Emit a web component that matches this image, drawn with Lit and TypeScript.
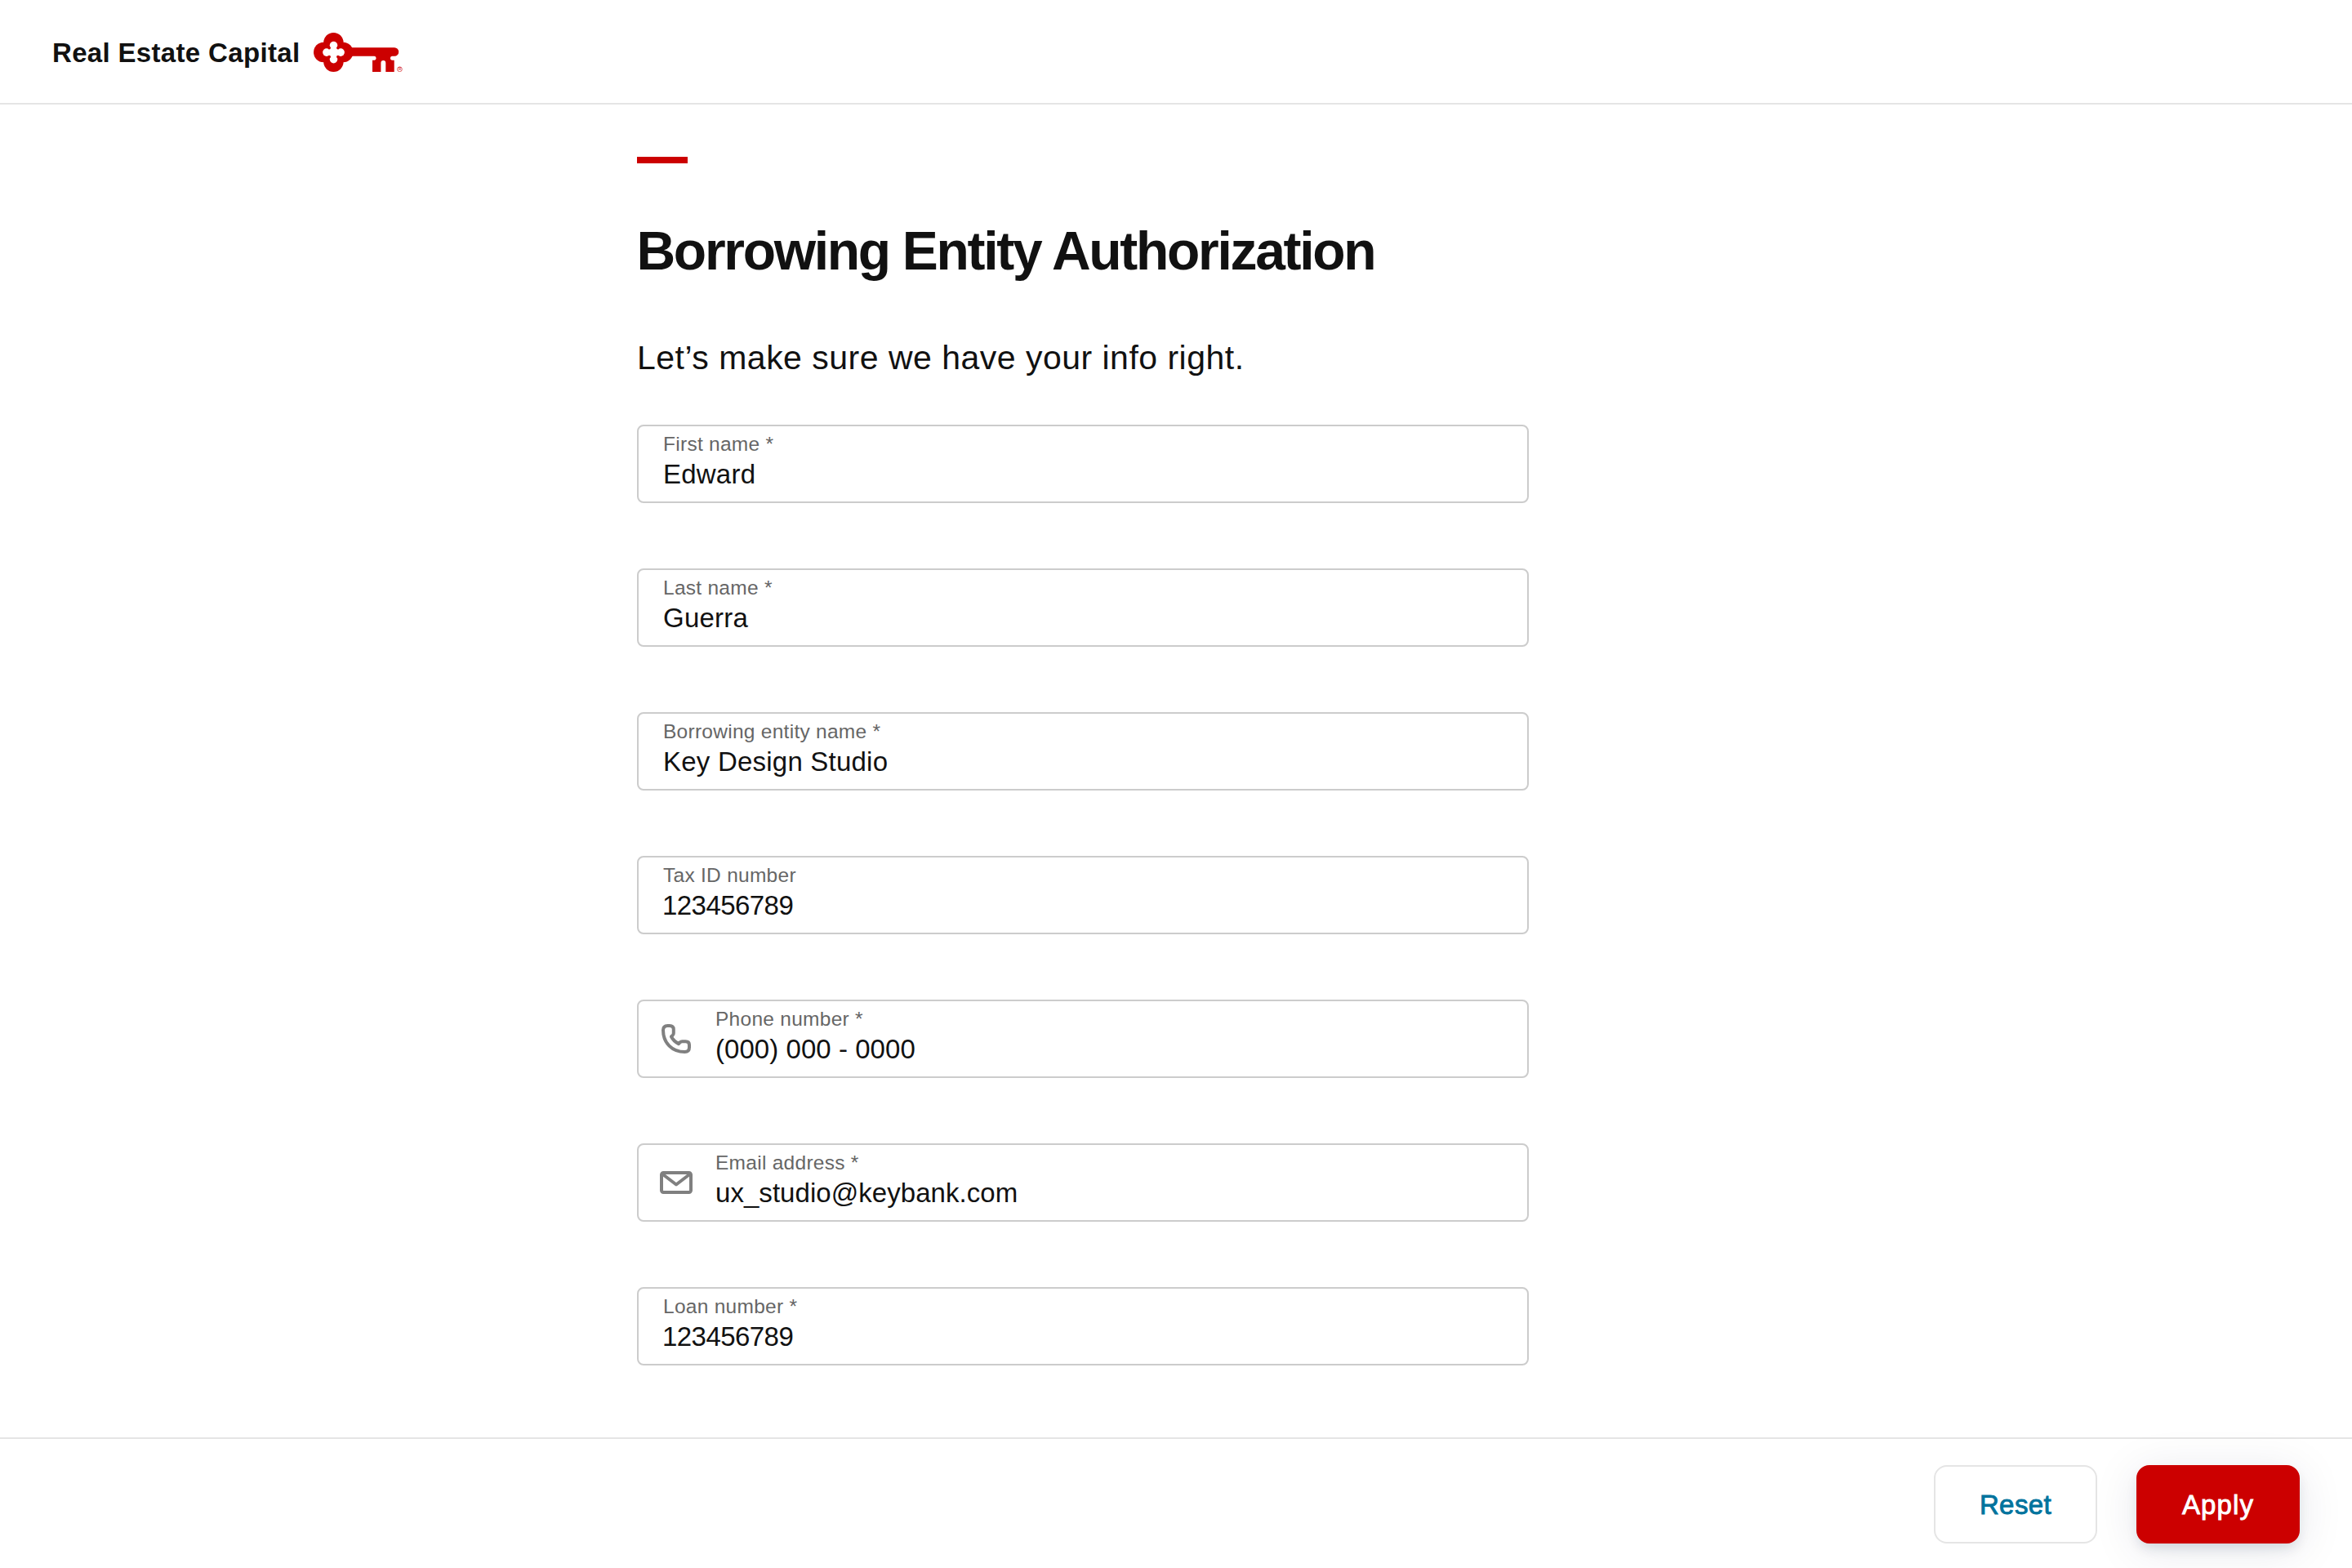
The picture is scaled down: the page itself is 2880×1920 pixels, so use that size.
import { LitElement, html, css, svg, nothing } from 'lit';
import { customElement, property } from 'lit/decorators.js';

type FieldIcon = 'phone' | 'email';

interface Field {
  label: string;
  value: string;
  icon?: FieldIcon;
}

const FIELDS: Field[] = [
  { label: 'First name *', value: 'Edward' },
  { label: 'Last name *', value: 'Guerra' },
  { label: 'Borrowing entity name *', value: 'Key Design Studio' },
  { label: 'Tax ID number', value: '123456789' },
  { label: 'Phone number *', value: '(000) 000 - 0000', icon: 'phone' },
  { label: 'Email address *', value: 'ux_studio@keybank.com', icon: 'email' },
  { label: 'Loan number *', value: '123456789' },
];

const icons = {
  phone: svg`
    <path d="M13.5 8 H16 Q20.8 8 20.8 12.5 V17 Q20.8 18.6 19.7 19.7 L18 21.3 Q20.5 26.6 27 30.2 L28.6 28.4 Q29.7 27.2 31.3 27.2 H35.5 Q40 27.2 40 31.5 V34.5 Q40 40 34.5 40 C19 40 8 29 8 13.5 Q8 8 13.5 8 Z" />
  `,
  email: svg`
    <rect x="6" y="12" width="36" height="24" rx="2.4" />
    <path d="M7 13.5 L24 26.5 L41 13.5" />
  `,
};

@customElement('key-logo')
export class KeyLogo extends LitElement {
  static styles = css`
    :host {
      display: block;
      height: 48px;
    }

    svg {
      display: block;
      fill: #cc0000;
    }

    .cutout {
      fill: #fff;
    }

    .ring {
      fill: none;
      stroke: #cc0000;
      stroke-width: 0.6;
    }

    text {
      font: 4.6px 'Liberation Sans', sans-serif;
    }
  `;

  protected render() {
    return html`
      <svg width="112" height="48" viewBox="0 0 112 48">
        <circle cx="24.4" cy="12.2" r="12.2" />
        <circle cx="12.2" cy="24" r="12.2" />
        <circle cx="36.2" cy="24" r="12.2" />
        <circle cx="24.4" cy="35.8" r="12.2" />
        <g class="cutout">
          <circle cx="24.5" cy="15.6" r="4.8" />
          <circle cx="24.5" cy="32.6" r="4.8" />
          <circle cx="15.9" cy="24.1" r="4.8" />
          <circle cx="33.1" cy="24.1" r="4.8" />
          <rect x="18.9" y="18.5" width="11.2" height="11.2" />
        </g>
        <circle cx="19.2" cy="18.8" r="1.7" />
        <circle cx="29.8" cy="18.8" r="1.7" />
        <circle cx="19.2" cy="29.4" r="1.7" />
        <circle cx="29.8" cy="29.4" r="1.7" />
        <path
          d="M44 18.2 H99 A5.2 5.2 0 0 1 99 28.7 H96 A2.6 2.6 0 0 0 96 33.8 H98.7 V48 H88.3 V37 A2.9 2.9 0 0 0 82.4 37 V48 H72 V33.8 H74.5 A2.6 2.6 0 0 0 74.5 28.7 H44 Z"
        />
        <circle class="ring" cx="105.4" cy="44.8" r="2.9" />
        <text x="103.9" y="46.4">R</text>
      </svg>
    `;
  }
}

@customElement('form-field')
export class FormField extends LitElement {
  @property() label = '';
  @property() value = '';
  @property() icon?: FieldIcon;

  static styles = css`
    :host {
      display: block;
    }

    .box {
      box-sizing: border-box;
      display: flex;
      height: 96px;
      padding: 8px 30px;
      border: 2px solid #cccccc;
      border-radius: 8px;
    }
    .box.with-icon {
      padding-left: 22px;
    }

    .icon {
      width: 48px;
      height: 48px;
      margin: 14px 24px 0 0;
      fill: none;
      stroke: #808080;
      stroke-width: 4;
      stroke-linejoin: round;
    }

    .label {
      color: #666666;
      font-size: 24.5px;
      line-height: 27px;
      letter-spacing: 0.27px;
    }

    .value {
      margin-top: 5px;
      color: #111111;
      font-size: 33px;
      line-height: 37px;
      letter-spacing: 0.22px;
    }
    .with-icon .value {
      letter-spacing: 0.05px;
    }
    .value.numeric {
      margin-left: -1px;
      letter-spacing: -0.55px;
    }
  `;

  protected render() {
    const numeric = /^\d+$/.test(this.value);

    return html`
      <div class="box ${this.icon ? 'with-icon' : ''}">
        ${this.icon
          ? html`<svg class="icon" viewBox="0 0 48 48">${icons[this.icon]}</svg>`
          : nothing}
        <div>
          <div class="label">${this.label}</div>
          <div class="value ${numeric ? 'numeric' : ''}">${this.value}</div>
        </div>
      </div>
    `;
  }
}

@customElement('app-root')
export class AppRoot extends LitElement {
  static styles = css`
    :host {
      display: flex;
      flex-direction: column;
      box-sizing: border-box;
      height: 1920px;
      overflow: hidden;
      background: #fff;
      color: #111111;
      font-family: 'Liberation Sans', Arial, sans-serif;
    }

    header {
      box-sizing: border-box;
      display: flex;
      height: 128px;
      padding: 40px 64px 0;
      border-bottom: 2px solid #e5e5e5;
    }

    .brand {
      width: 320px;
      margin-top: 6px;
      font-size: 33px;
      font-weight: 700;
      line-height: 37px;
      letter-spacing: 0.33px;
    }

    main {
      flex: 1;
      width: 1092px;
      padding: 64px 0 0 780px;
    }

    .accent {
      width: 62px;
      height: 8px;
      background: #cc0000;
    }

    h1 {
      margin: 70px 0 0 -0.5px;
      font-size: 66px;
      line-height: 74px;
      letter-spacing: -2.3px;
      white-space: nowrap;
    }

    .lead {
      margin: 71px 0 59px;
      font-size: 41px;
      line-height: 46px;
      letter-spacing: 0.49px;
    }

    form {
      display: flex;
      flex-direction: column;
      gap: 80px;
    }

    footer {
      box-sizing: border-box;
      display: flex;
      justify-content: flex-end;
      gap: 48px;
      height: 160px;
      padding: 32px 64px 0;
      border-top: 2px solid #e5e5e5;
    }

    button {
      box-sizing: border-box;
      width: 200px;
      height: 96px;
      padding: 0;
      border: 2px solid #e5e5e5;
      border-radius: 16px;
      background: #fff;
      color: #00739d;
      font-family: inherit;
      font-size: 33px;
      line-height: 37px;
      letter-spacing: 0.4px;
      -webkit-text-stroke: 0.9px currentColor;
    }
    button.primary {
      border-color: #cc0000;
      background: #cc0000;
      color: #fff;
      letter-spacing: 1.1px;
      box-shadow:
        0 8px 16px -4px rgba(20, 30, 70, 0.16),
        0 8px 56px rgba(20, 30, 70, 0.1);
    }
  `;

  protected render() {
    return html`
      <header>
        <span class="brand">Real Estate Capital</span>
        <key-logo></key-logo>
      </header>
      <main>
        <div class="accent"></div>
        <h1>Borrowing Entity Authorization</h1>
        <p class="lead">Let’s make sure we have your info right.</p>
        <form>
          ${FIELDS.map(
            ({ label, value, icon }) => html`
              <form-field .label=${label} .value=${value} .icon=${icon}></form-field>
            `
          )}
        </form>
      </main>
      <footer>
        <button type="button">Reset</button>
        <button type="button" class="primary">Apply</button>
      </footer>
    `;
  }
}

declare global {
  interface HTMLElementTagNameMap {
    'app-root': AppRoot;
    'form-field': FormField;
    'key-logo': KeyLogo;
  }
}
